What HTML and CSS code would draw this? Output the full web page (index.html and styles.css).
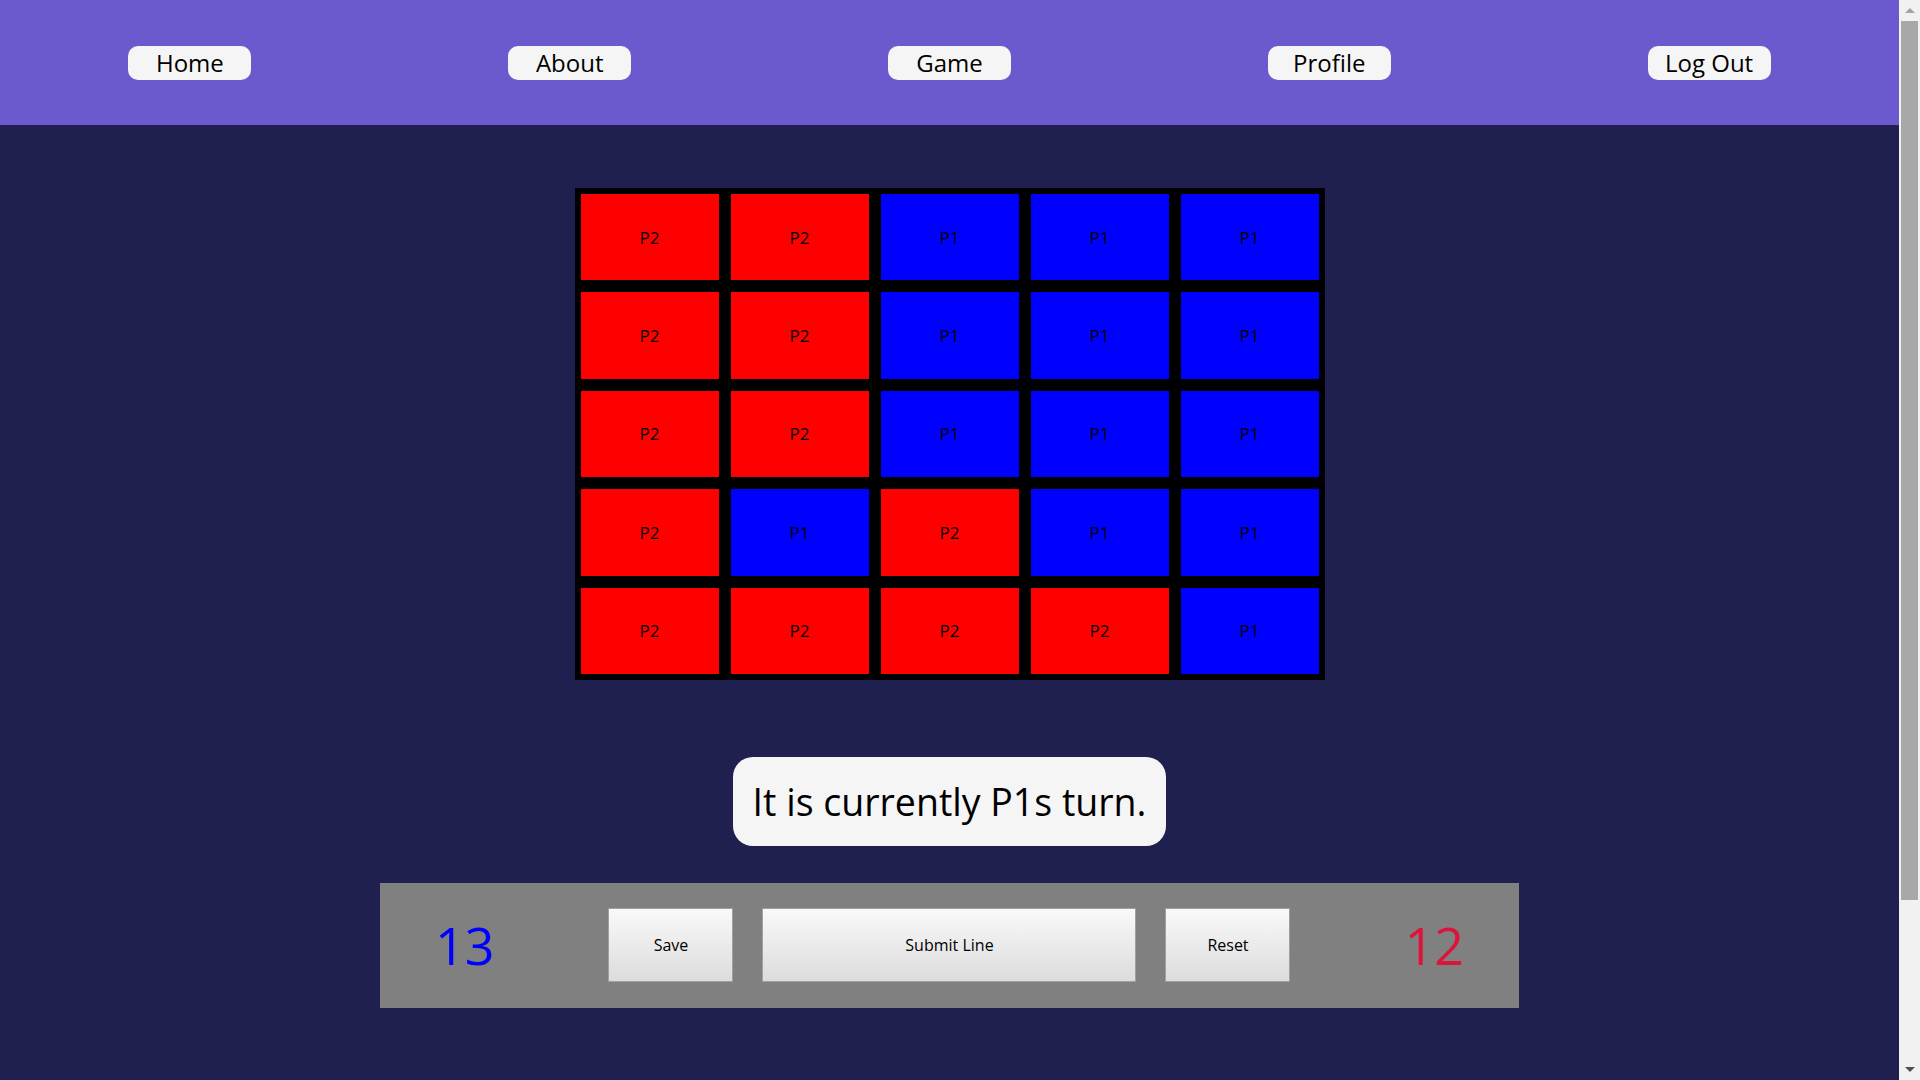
FILE: index.html
```html
<!DOCTYPE html>
<html lang="en">
<head>
<meta charset="utf-8">
<title>Game</title>
<link rel="stylesheet" href="styles.css">
</head>
<body>
<header class="topbar">
  <nav class="nav">
    <div class="nav-item"><a class="nav-btn" href="#">Home</a></div>
    <div class="nav-item"><a class="nav-btn" href="#">About</a></div>
    <div class="nav-item"><a class="nav-btn" href="#">Game</a></div>
    <div class="nav-item"><a class="nav-btn" href="#">Profile</a></div>
    <div class="nav-item"><a class="nav-btn" href="#">Log Out</a></div>
  </nav>
</header>
<main class="main">
  <div class="board">
    <div class="cell p2">P2</div><div class="cell p2">P2</div><div class="cell p1">P1</div><div class="cell p1">P1</div><div class="cell p1">P1</div>
    <div class="cell p2">P2</div><div class="cell p2">P2</div><div class="cell p1">P1</div><div class="cell p1">P1</div><div class="cell p1">P1</div>
    <div class="cell p2">P2</div><div class="cell p2">P2</div><div class="cell p1">P1</div><div class="cell p1">P1</div><div class="cell p1">P1</div>
    <div class="cell p2">P2</div><div class="cell p1">P1</div><div class="cell p2">P2</div><div class="cell p1">P1</div><div class="cell p1">P1</div>
    <div class="cell p2">P2</div><div class="cell p2">P2</div><div class="cell p2">P2</div><div class="cell p2">P2</div><div class="cell p1">P1</div>
  </div>
  <div class="turn">It is currently P1s turn.</div>
  <div class="controls">
    <div class="score score-p1">13</div>
    <div class="actions">
      <button class="ctl-btn btn-small">Save</button>
      <button class="ctl-btn btn-wide">Submit Line</button>
      <button class="ctl-btn btn-small">Reset</button>
    </div>
    <div class="score score-p2">12</div>
  </div>
</main>
<div class="scrollbar" aria-hidden="true">
  <div class="sb-arrow sb-up"></div>
  <div class="sb-thumb"></div>
  <div class="sb-arrow sb-down"></div>
</div>
</body>
</html>
```
FILE: styles.css
```css
html, body {
  padding: 0;
}
html {
  margin: 0;
}
body {
  margin: 0 21px 0 0;
  background: #202050;
  font-family: "Open Sans", "Liberation Sans", sans-serif;
  color: #000;
}
html {
  background: #202050;
}
.topbar {
  background: #6a5acd;
  height: 125px;
  display: flex;
  align-items: center;
}
.nav {
  display: flex;
  width: 100%;
}
.nav-item {
  flex: 1;
  display: flex;
  justify-content: center;
}
.nav-btn {
  display: flex;
  align-items: center;
  justify-content: center;
  width: 123px;
  height: 34px;
  background: #f5f5f5;
  border-radius: 10px;
  color: #000;
  text-decoration: none;
  font-size: 24px;
}
.main {
  display: flex;
  flex-direction: column;
  align-items: center;
  padding: 63px 0 277px;
}
.board {
  display: grid;
  grid-template-columns: repeat(5, 138px);
  grid-auto-rows: 86.4px;
  gap: 12px;
  padding: 6px;
  background: #000;
}
.cell {
  display: flex;
  align-items: center;
  justify-content: center;
  font-size: 17px;
  color: #000;
}
.p1 { background: #0000ff; }
.p2 { background: #ff0000; }
.turn {
  margin-top: 77px;
  background: #f5f5f5;
  border-radius: 20px;
  padding: 19px 20px;
  font-size: 37.5px;
  line-height: 51px;
}
.controls {
  margin-top: 37px;
  width: 60%;
  height: 125px;
  background: #808080;
  display: flex;
  align-items: center;
  justify-content: space-between;
}
.score {
  width: 170px;
  text-align: center;
  font-size: 52px;
  line-height: 1;
}
.score-p1 { color: #0000ff; }
.score-p2 { color: #dc143c; }
.actions {
  display: flex;
  gap: 29px;
}
.ctl-btn {
  height: 74px;
  border: 1px solid #a0a0a0;
  background: linear-gradient(#f9f9f9, #dcdcdc);
  font-family: "Open Sans", "Liberation Sans", sans-serif;
  font-size: 16px;
  color: #000;
  padding: 0;
}
.btn-small { width: 125px; }
.btn-wide { width: 374px; }

/* decorative browser scrollbar seen in the reference */
.scrollbar {
  position: fixed;
  top: 0;
  right: 0;
  width: 21px;
  height: 100vh;
  background: #f1f1f1;
  display: flex;
  flex-direction: column;
  align-items: center;
}
.sb-arrow {
  width: 0;
  height: 0;
  border-left: 5px solid transparent;
  border-right: 5px solid transparent;
}
.sb-up {
  margin-top: 8px;
  border-bottom: 5px solid #a3a3a3;
}
.sb-down {
  margin-top: auto;
  margin-bottom: 8px;
  border-top: 5px solid #505050;
}
.sb-thumb {
  width: 17px;
  margin-top: 8px;
  height: 879px;
  background: #a8a8a8;
}
```
